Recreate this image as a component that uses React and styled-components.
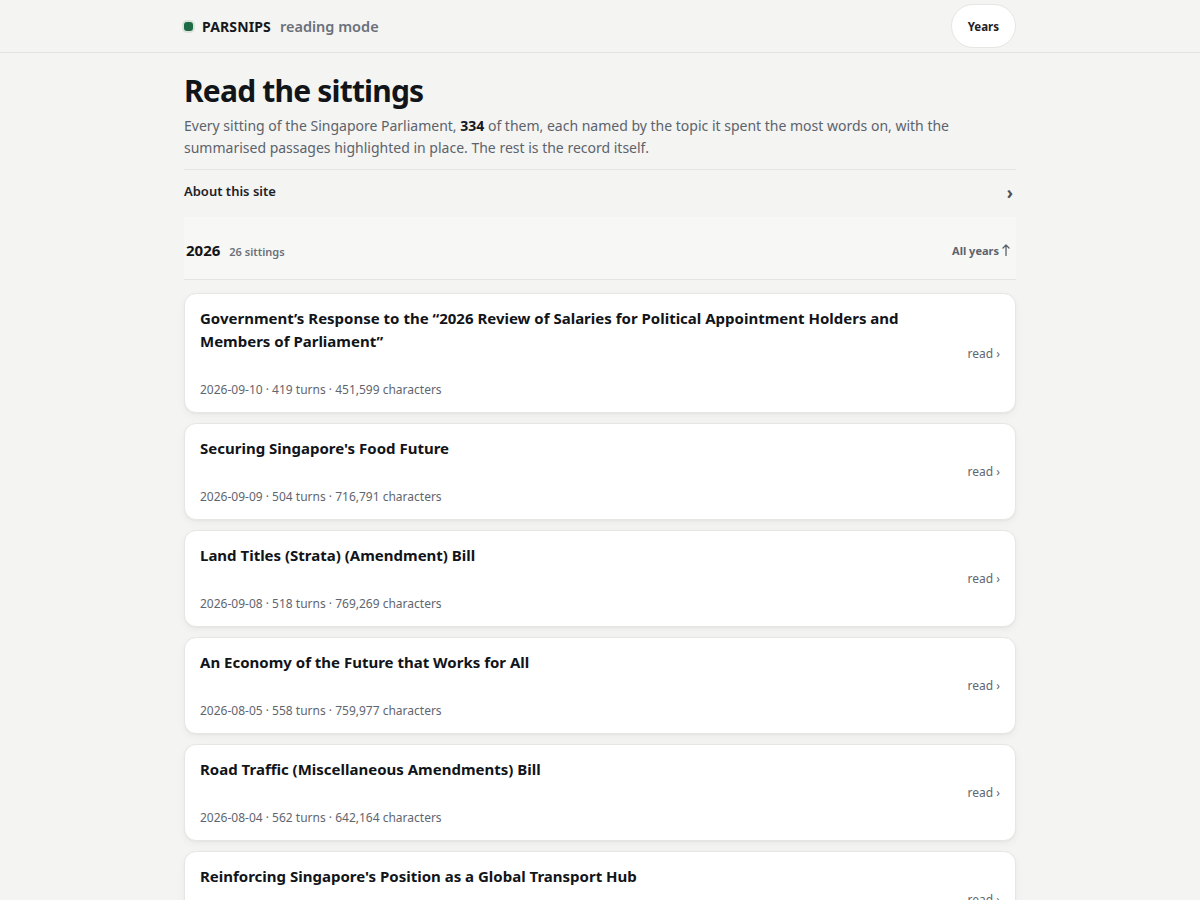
import styled, { createGlobalStyle } from "styled-components";

const GlobalStyle = createGlobalStyle`
  * {
    box-sizing: border-box;
  }
  body {
    margin: 0;
    background: #f4f4f2;
    font-family: "Noto Sans", "Open Sans", sans-serif;
    color: #15181c;
  }
`;

const TopBar = styled.header`
  height: 53px;
  border-bottom: 1px solid #e3e3e0;
  display: flex;
  justify-content: center;
`;

const TopInner = styled.div`
  width: 832px;
  display: flex;
  align-items: center;
  justify-content: space-between;
`;

const Brand = styled.div`
  display: flex;
  align-items: center;
  gap: 9px;
`;

const Dot = styled.span`
  width: 9px;
  height: 9px;
  border-radius: 3px;
  background: #1d6a45;
  box-shadow: 0 0 0 2px rgba(29, 106, 69, 0.12);
`;

const BrandName = styled.span`
  font-size: 14px;
  font-weight: 700;
  letter-spacing: 0.01em;
  color: #15181c;
`;

const BrandMode = styled.span`
  font-size: 14.5px;
  font-weight: 600;
  color: #6a7079;
`;

const PillButton = styled.button`
  height: 44px;
  padding: 0 16px;
  border-radius: 22px;
  border: 1px solid #e6e6e3;
  background: #fff;
  font-family: inherit;
  font-size: 11.5px;
  font-weight: 700;
  color: #1d2126;
`;

const Main = styled.main`
  width: 832px;
  margin: 0 auto;
  padding-top: 18px;
`;

const Title = styled.h1`
  margin: 0;
  font-size: 30px;
  line-height: 40px;
  font-weight: 700;
  letter-spacing: -0.027em;
  color: #111418;
`;

const Lead = styled.p`
  margin: 4px 0 0;
  font-size: 14px;
  line-height: 22px;
  color: #5c636c;

  b {
    color: #15181c;
    font-weight: 700;
  }
`;

const AboutRow = styled.div`
  margin-top: 10px;
  border-top: 1px solid #e4e4e1;
  padding: 9px 0 10px;
  display: flex;
  align-items: center;
  justify-content: space-between;
  font-size: 13px;
  line-height: 20px;
  font-weight: 600;
  color: #1d2126;
`;

const Chevron = styled.span`
  font-size: 17px;
  font-weight: 700;
  color: #4a5059;
  padding-right: 3px;
  margin-top: 4px;
`;

const YearBand = styled.div`
  margin-top: 4px;
  height: 63px;
  background: #f7f7f5;
  border-bottom: 1px solid #e4e4e1;
  display: flex;
  align-items: center;
  justify-content: space-between;
  padding: 4px 6px 0 2px;
`;

const YearLabel = styled.div`
  display: flex;
  align-items: baseline;
  gap: 9px;
`;

const Year = styled.span`
  font-size: 15px;
  font-weight: 700;
  color: #111418;
`;

const YearCount = styled.span`
  font-size: 11px;
  font-weight: 600;
  color: #6a7079;
`;

const AllYears = styled.span`
  font-size: 11px;
  font-weight: 700;
  color: #5c636c;
  display: flex;
  align-items: center;
  gap: 3px;
`;

const List = styled.div`
  margin-top: 13px;
  display: flex;
  flex-direction: column;
  gap: 10px;
`;

const Card = styled.article`
  background: #fff;
  border: 1px solid #e6e6e3;
  border-radius: 12px;
  box-shadow: 0 1px 2px rgba(0, 0, 0, 0.04), 0 3px 8px rgba(0, 0, 0, 0.04);
  padding: 13px 15px 13px;
  display: flex;
  align-items: center;
  gap: 24px;
`;

const CardBody = styled.div`
  flex: 1;
  min-width: 0;
`;

const CardTitle = styled.h2`
  margin: 0;
  font-size: 15px;
  line-height: 23px;
  font-weight: 700;
  color: #111418;
`;

const Meta = styled.div`
  margin-top: 28px;
  font-size: 12px;
  line-height: 18px;
  color: #5f666f;
`;

const ReadLink = styled.span`
  font-size: 12px;
  color: #5f666f;
  white-space: nowrap;
`;

const sittings = [
  {
    title:
      "Government\u2019s Response to the \u201c2026 Review of Salaries for Political Appointment Holders and Members of Parliament\u201d",
    date: "2026-09-10",
    turns: 419,
    chars: "451,599",
  },
  {
    title: "Securing Singapore's Food Future",
    date: "2026-09-09",
    turns: 504,
    chars: "716,791",
  },
  {
    title: "Land Titles (Strata) (Amendment) Bill",
    date: "2026-09-08",
    turns: 518,
    chars: "769,269",
  },
  {
    title: "An Economy of the Future that Works for All",
    date: "2026-08-05",
    turns: 558,
    chars: "759,977",
  },
  {
    title: "Road Traffic (Miscellaneous Amendments) Bill",
    date: "2026-08-04",
    turns: 562,
    chars: "642,164",
  },
  {
    title: "Reinforcing Singapore's Position as a Global Transport Hub",
    date: "2026-07-08",
    turns: 471,
    chars: "603,518",
  },
];

const ArrowUp = () => (
  <svg width="8" height="12" viewBox="0 0 8 12" fill="none">
    <path
      d="M4 11.5V1M1 4l3-3 3 3"
      stroke="#5c636c"
      strokeWidth="1.3"
      strokeLinecap="round"
      strokeLinejoin="round"
    />
  </svg>
);

const App = () => {
  return (
    <>
      <GlobalStyle />
      <TopBar>
        <TopInner>
          <Brand>
            <Dot />
            <BrandName>PARSNIPS</BrandName>
            <BrandMode>reading mode</BrandMode>
          </Brand>
          <PillButton>Years</PillButton>
        </TopInner>
      </TopBar>
      <Main>
        <Title>Read the sittings</Title>
        <Lead>
          Every sitting of the Singapore Parliament, <b>334</b> of them, each
          named by the topic it spent the most words on, with the summarised
          passages highlighted in place. The rest is the record itself.
        </Lead>
        <AboutRow>
          About this site
          <Chevron>›</Chevron>
        </AboutRow>
        <YearBand>
          <YearLabel>
            <Year>2026</Year>
            <YearCount>26 sittings</YearCount>
          </YearLabel>
          <AllYears>
            All years <ArrowUp />
          </AllYears>
        </YearBand>
        <List>
          {sittings.map((s) => (
            <Card key={s.date}>
              <CardBody>
                <CardTitle>{s.title}</CardTitle>
                <Meta>
                  {s.date} · {s.turns} turns · {s.chars} characters
                </Meta>
              </CardBody>
              <ReadLink>read ›</ReadLink>
            </Card>
          ))}
        </List>
      </Main>
    </>
  );
};

export default App;
